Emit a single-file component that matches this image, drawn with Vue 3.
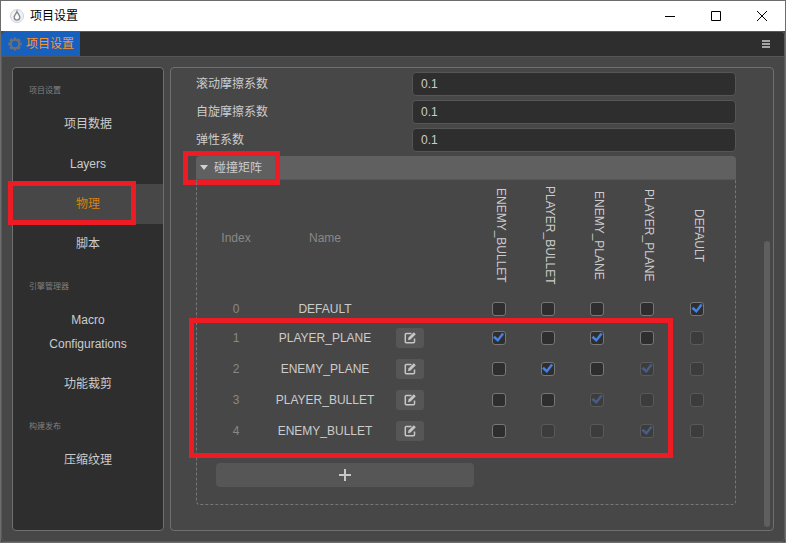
<script setup>
import { reactive } from 'vue'

const menu = [
  { title: '项目设置', items: ['项目数据', 'Layers', '物理', '脚本'] },
  { title: '引擎管理器', items: ['Macro Configurations', '功能裁剪'] },
  { title: '构建发布', items: ['压缩纹理'] },
]
const active = '物理'

const fields = reactive([
  { id: 'rolling', label: '滚动摩擦系数', value: '0.1' },
  { id: 'spinning', label: '自旋摩擦系数', value: '0.1' },
  { id: 'restitution', label: '弹性系数', value: '0.1' },
])

const columns = ['ENEMY_BULLET', 'PLAYER_BULLET', 'ENEMY_PLANE', 'PLAYER_PLANE', 'DEFAULT']
const groups = reactive([
  { name: 'DEFAULT', hits: [false, false, false, false, true] },
  { name: 'PLAYER_PLANE', hits: [true, false, true, false, false] },
  { name: 'ENEMY_PLANE', hits: [false, true, false, true, false] },
  { name: 'PLAYER_BULLET', hits: [false, false, true, false, false] },
  { name: 'ENEMY_BULLET', hits: [false, false, false, true, false] },
])

// The lower-right half of the matrix mirrors the upper-left one and is read-only.
const mirrored = (row, col) => row + col >= columns.length
</script>

<template>
  <div class="window">
    <header class="titlebar">
      <svg class="logo" viewBox="0 0 14 14" aria-hidden="true">
        <circle cx="7" cy="7" r="6.500" fill="#f1f2f4" stroke="#cfd0d6" />
        <path
          d="M7 2.600C6.300 4.600 4.200 6 4.200 8.300a2.800 2.800 0 0 0 5.600 0C9.800 6 7.700 4.600 7 2.600Z"
          fill="#fbfbfc" stroke="#858b95" stroke-width="1.400" />
      </svg>
      <h1>项目设置</h1>
      <div class="controls">
        <button type="button" aria-label="最小化">
          <svg viewBox="0 0 12 12"><path d="M1 6.500h10" /></svg>
        </button>
        <button type="button" aria-label="最大化">
          <svg viewBox="0 0 12 12"><path d="M1.500 1.500h9v9h-9z" /></svg>
        </button>
        <button type="button" aria-label="关闭">
          <svg viewBox="0 0 12 12"><path d="M1 1l10 10M11 1L1 11" /></svg>
        </button>
      </div>
    </header>

    <div class="app">
      <nav class="tabs">
        <button type="button" class="tab">
          <svg viewBox="0 0 14 14" aria-hidden="true">
            <circle cx="7" cy="7" r="4.200" fill="none" stroke="#6d7175" stroke-width="2" />
            <path
              d="M7 .4v2M7 11.600v2M.4 7h2M11.600 7h2M2.300 2.300l1.400 1.400M10.300 10.300l1.400 1.400M11.700 2.300l-1.400 1.400M3.700 10.300l-1.400 1.400"
              stroke="#6d7175" stroke-width="2.800" />
          </svg>
          <span>项目设置</span>
        </button>
        <button type="button" class="more" aria-label="菜单">
          <svg viewBox="0 0 8 8"><path d="M0 0h8v2H0zM0 3h8v2H0zM0 6h8v2H0z" fill="#a5a5a5" /></svg>
        </button>
      </nav>

      <div class="body">
        <aside class="sidebar">
          <section v-for="block in menu" :key="block.title">
            <h2>{{ block.title }}</h2>
            <a v-for="item in block.items" :key="item" href="#" :class="{ active: item === active }">
              {{ item }}<span v-if="item === active" class="mark mark-item"></span>
            </a>
          </section>
        </aside>

        <main class="panel">
          <div v-for="f in fields" :key="f.id" class="field">
            <label :for="f.id">{{ f.label }}</label>
            <input :id="f.id" v-model="f.value" type="text" />
          </div>

          <section class="group">
            <button type="button" class="group-head" aria-expanded="true">
              <svg viewBox="0 0 8 5" aria-hidden="true"><path d="M0 0h8L4 5z" fill="#d0d0d0" /></svg>
              <span>碰撞矩阵</span>
              <span class="mark mark-head"></span>
            </button>
            <div class="group-body">
              <table>
                <colgroup>
                  <col class="c-index" />
                  <col />
                  <col class="c-edit" />
                  <col class="c-bullet" span="2" />
                  <col class="c-check" span="3" />
                </colgroup>
                <thead>
                  <tr>
                    <th>Index</th>
                    <th>Name</th>
                    <td></td>
                    <th v-for="c in columns" :key="c" class="vertical"><span>{{ c }}</span></th>
                  </tr>
                </thead>
                <tbody>
                  <tr v-for="(g, row) in groups" :key="g.name">
                    <td class="index">{{ row }}</td>
                    <td>{{ g.name }}</td>
                    <td class="edit">
                      <button v-if="row > 0" type="button" :aria-label="'编辑 ' + g.name">
                        <svg viewBox="0 0 12 12" fill="none" stroke="#c6c6c6">
                          <path d="M7.500 1.500H2.300a1 1 0 0 0-1 1v7.200a1 1 0 0 0 1 1h7.200a1 1 0 0 0 1-1V6.500" stroke-width="1.500" />
                          <path d="M4 8.200l.5-2.700L9.800.2l2 2-5.200 5.400z" fill="#c6c6c6" stroke="none" />
                        </svg>
                      </button>
                    </td>
                    <td v-for="(c, col) in columns" :key="c">
                      <input
                        v-model="g.hits[col]" type="checkbox" :disabled="mirrored(row, col)"
                        :aria-label="g.name + ' / ' + c" />
                    </td>
                  </tr>
                </tbody>
              </table>
              <button type="button" class="add" aria-label="添加">
                <svg viewBox="0 0 12 12"><path d="M6 0v12M0 6h12" stroke="#c8c8c8" stroke-width="2" /></svg>
              </button>
              <span class="mark mark-rows"></span>
            </div>
          </section>
          <div class="thumb"></div>
        </main>
      </div>
    </div>
  </div>
</template>

<style>
body {
  background: #474747;
}
</style>

<style scoped>
* {
  box-sizing: border-box;
}
.window {
  min-height: 100vh;
  display: flex;
  flex-direction: column;
  border: 1px solid #6c6c6c;
  background: #474747;
  color: #cccccc;
  font: 12px/24px "Liberation Sans", "Noto Sans CJK SC", sans-serif;
}
button,
input {
  font: inherit;
  color: inherit;
  margin: 0;
  padding: 0;
  border: 0;
  background: none;
}
svg {
  display: block;
}
h1,
h2 {
  margin: 0;
  font-weight: normal;
}
.titlebar {
  height: 30px;
  flex: none;
  display: flex;
  align-items: center;
  padding-left: 9px;
  gap: 6px;
  background: #ffffff;
  color: #000000;
}
.logo {
  width: 14px;
  height: 14px;
}
h1 {
  font-size: 12px;
}
.controls {
  margin-left: auto;
  display: flex;
}
.controls button {
  width: 46px;
  height: 30px;
  display: grid;
  place-items: center;
}
.controls svg {
  width: 12px;
  height: 12px;
  fill: none;
  stroke: #000000;
}
.app {
  flex: 1;
  display: flex;
  flex-direction: column;
  border: 1px solid #5a5a5a;
  border-radius: 4px;
}
.tabs {
  height: 25px;
  flex: none;
  display: flex;
  justify-content: space-between;
  background: #2e2e2e;
  border-bottom: 1px solid #555555;
  border-radius: 3px 3px 0 0;
}
.tab {
  display: flex;
  align-items: center;
  gap: 4px;
  padding: 0 6px;
  background: #1860bd;
  color: #fd942b;
  border-radius: 3px 0 0 0;
}
.tab svg {
  width: 14px;
  height: 14px;
}
.more {
  padding: 0 14px;
}
.more svg {
  width: 8px;
  height: 8px;
}
.body {
  flex: 1;
  display: grid;
  grid-template-columns: 152px 1fr;
  gap: 6px;
  padding: 10px;
}
.sidebar,
.panel {
  border: 1px solid #6f6f6f;
  border-radius: 4px;
}
.sidebar {
  background: #2e2e2e;
  text-align: center;
}
h2 {
  padding: 10px 16px 0;
  font-size: 8px;
  line-height: 26px;
  text-align: left;
  color: #808080;
}
.sidebar a {
  position: relative;
  display: block;
  padding: 8px 28px;
  color: inherit;
  text-decoration: none;
}
.sidebar a.active {
  background: #474747;
  color: #d6820c;
}
.panel {
  position: relative;
  display: flex;
  flex-direction: column;
  gap: 4px;
  padding: 4px 37px 24px 25px;
}
.field {
  display: grid;
  grid-template-columns: 2fr 3fr;
}
.field input {
  width: 100%;
  height: 24px;
  padding: 0 8px;
  background: #2e2e2e;
  border: 1px solid #555555;
  border-radius: 4px;
}
.group-head {
  position: relative;
  width: 100%;
  height: 24px;
  display: flex;
  align-items: center;
  gap: 6px;
  padding: 0 4px;
  background: #606060;
  border-bottom: 1px solid #565656;
  border-radius: 4px 4px 0 0;
}
.group-head svg {
  width: 8px;
  height: 5px;
}
.group-head span {
  line-height: 22px;
}
.group-body {
  position: relative;
  padding: 0 13px 17px 19px;
  border: 1px dashed #777777;
  border-top: 0;
  border-radius: 0 0 4px 4px;
}
table {
  width: 100%;
  table-layout: fixed;
  border-collapse: collapse;
  text-align: center;
}
.c-index {
  width: 40px;
}
.c-edit {
  width: 80px;
}
.c-bullet {
  width: 49px;
}
.c-check {
  width: 50px;
}
th,
td {
  padding: 0;
  font-weight: normal;
}
thead tr {
  height: 115px;
}
th,
.index {
  color: #888888;
}
.vertical {
  padding: 0 0 4px 4px;
  color: #cccccc;
  line-height: 16px;
}
.vertical span {
  display: inline-block;
  vertical-align: middle;
  writing-mode: vertical-rl;
}
tbody tr {
  height: 31px;
}
tbody tr:first-child {
  height: 27px;
}
.edit button {
  width: 28px;
  height: 20px;
  display: grid;
  place-items: center;
  margin-left: 2px;
  background: #565656;
  border-radius: 3px;
}
.edit svg,
.add svg {
  width: 12px;
  height: 12px;
}
input[type="checkbox"] {
  appearance: none;
  position: relative;
  display: block;
  width: 14px;
  height: 14px;
  margin: 0 auto;
  background: #2e2e2e;
  border: 1px solid #767676;
  border-radius: 3px;
}
input[type="checkbox"]:checked::after {
  content: "";
  position: absolute;
  inset: -1px;
  background: #4680e2;
  clip-path: polygon(11% 52%, 24% 38%, 45% 57%, 75% 16%, 90% 26%, 46% 83%);
}
input[type="checkbox"]:disabled {
  opacity: 0.4;
}
.add {
  width: calc(100% - 248px);
  height: 24px;
  display: grid;
  place-items: center;
  margin-top: 17px;
  background: #565656;
  border-radius: 4px;
}
.thumb {
  position: absolute;
  right: 3px;
  bottom: 3px;
  width: 6px;
  height: 62%;
  background: #5f5f5f;
  border-radius: 3px;
}
.mark {
  position: absolute;
  border: 5px solid #ed1c24;
  pointer-events: none;
}
.mark-item {
  left: -5px;
  top: -3px;
  width: 128px;
  height: 44px;
}
.mark-head {
  left: -13px;
  top: -5px;
  width: 97px;
  height: 34px;
}
.mark-rows {
  left: -8px;
  right: 62px;
  top: 138px;
  height: 140px;
}
</style>
